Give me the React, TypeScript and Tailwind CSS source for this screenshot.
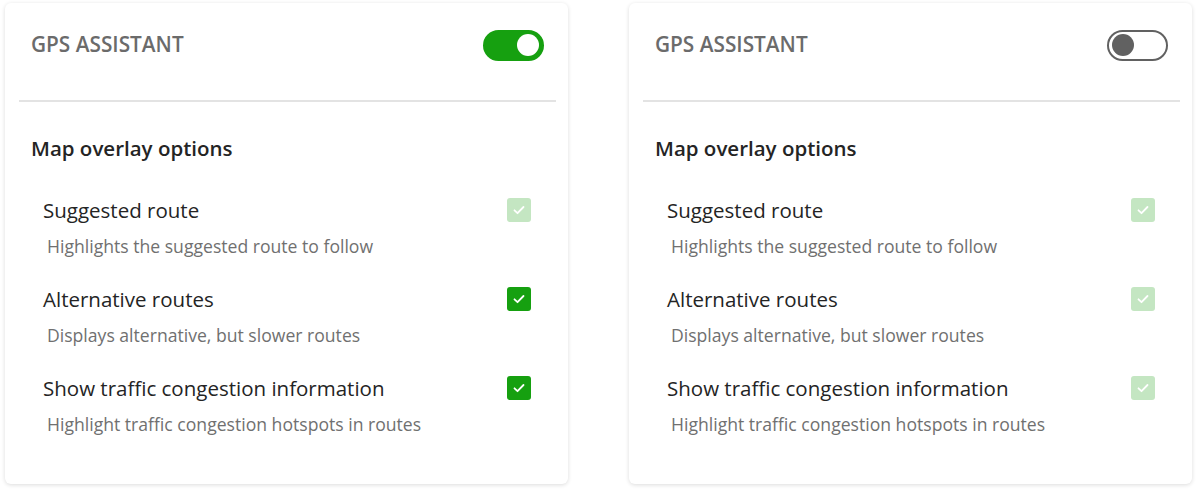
import { useState } from "react";

const FONT = { fontFamily: '"Segoe UI", "Open Sans", "Liberation Sans", sans-serif' };

interface Option {
  title: string;
  description: string;
  checked: boolean;
}

const OPTIONS: Option[] = [
  { title: "Suggested route", description: "Highlights the suggested route to follow", checked: true },
  { title: "Alternative routes", description: "Displays alternative, but slower routes", checked: true },
  { title: "Show traffic congestion information", description: "Highlight traffic congestion hotspots in routes", checked: true },
];

function Toggle({ on, onClick }: { on: boolean; onClick: () => void }) {
  return (
    <button onClick={onClick}
      className={`flex h-[31px] w-[61px] items-center rounded-full border-2 px-[3px] ${on ? "justify-end border-[#16a010] bg-[#16a010]" : "justify-start border-[#616161] bg-white"}`}>
      <span className={`block h-[22px] w-[22px] rounded-full ${on ? "bg-white" : "bg-[#616161]"}`} />
    </button>
  );
}

function Checkbox({ checked, disabled }: { checked: boolean; disabled: boolean }) {
  return (
    <span className={`flex h-[24px] w-[24px] items-center justify-center rounded-[3px] ${disabled ? "bg-[#c4e6c2]" : "bg-[#16a010]"}`}>
      {checked && (
        <svg width="14" height="14" viewBox="0 0 14 14" fill="none">
          <path d="M2.5 7.3l3 2.9 6-6.2" stroke="white" strokeWidth="1.8" strokeLinecap="round" strokeLinejoin="round" />
        </svg>
      )}
    </span>
  );
}

function GpsCard({ initialOn, firstDisabled }: { initialOn: boolean; firstDisabled: boolean }) {
  const [on, setOn] = useState(initialOn);
  return (
    <div className="h-[481px] w-[563px] shrink-0 rounded-[6px] bg-white shadow-[0_1px_4px_rgba(0,0,0,0.14)]">
      <div className="flex h-[84px] items-center justify-between pl-[26px] pr-[24px]">
        <h2 className="text-[20.8px] font-semibold text-[#6b6b6b]">GPS ASSISTANT</h2>
        <Toggle on={on} onClick={() => setOn((v) => !v)} />
      </div>
      <div className="ml-[14px] mr-[12px] mt-[13px] h-[2px] bg-[#e3e3e3]" />
      <h3 className="mt-[32px] pl-[26px] text-[20.5px] leading-[28px] font-semibold text-[#242424]">Map overlay options</h3>
      <div className="mt-[34px] flex flex-col gap-[27px] pl-[38px] pr-[37px]">
        {OPTIONS.map((o, i) => (
          <div key={o.title}>
            <div className="flex h-[28px] items-center justify-between">
              <span className="text-[20.5px] leading-[28px] text-[#242424]">{o.title}</span>
              <Checkbox checked={o.checked} disabled={!on || (i === 0 && firstDisabled)} />
            </div>
            <p className="mt-[10px] pl-[4px] text-[17.6px] leading-[24px] text-[#707070]">{o.description}</p>
          </div>
        ))}
      </div>
    </div>
  );
}

export default function App() {
  return (
    <div className="flex min-h-screen gap-[61px] bg-white pl-[5px] pt-[3px]" style={FONT}>
      <GpsCard initialOn={true} firstDisabled={true} />
      <GpsCard initialOn={false} firstDisabled={true} />
    </div>
  );
}
